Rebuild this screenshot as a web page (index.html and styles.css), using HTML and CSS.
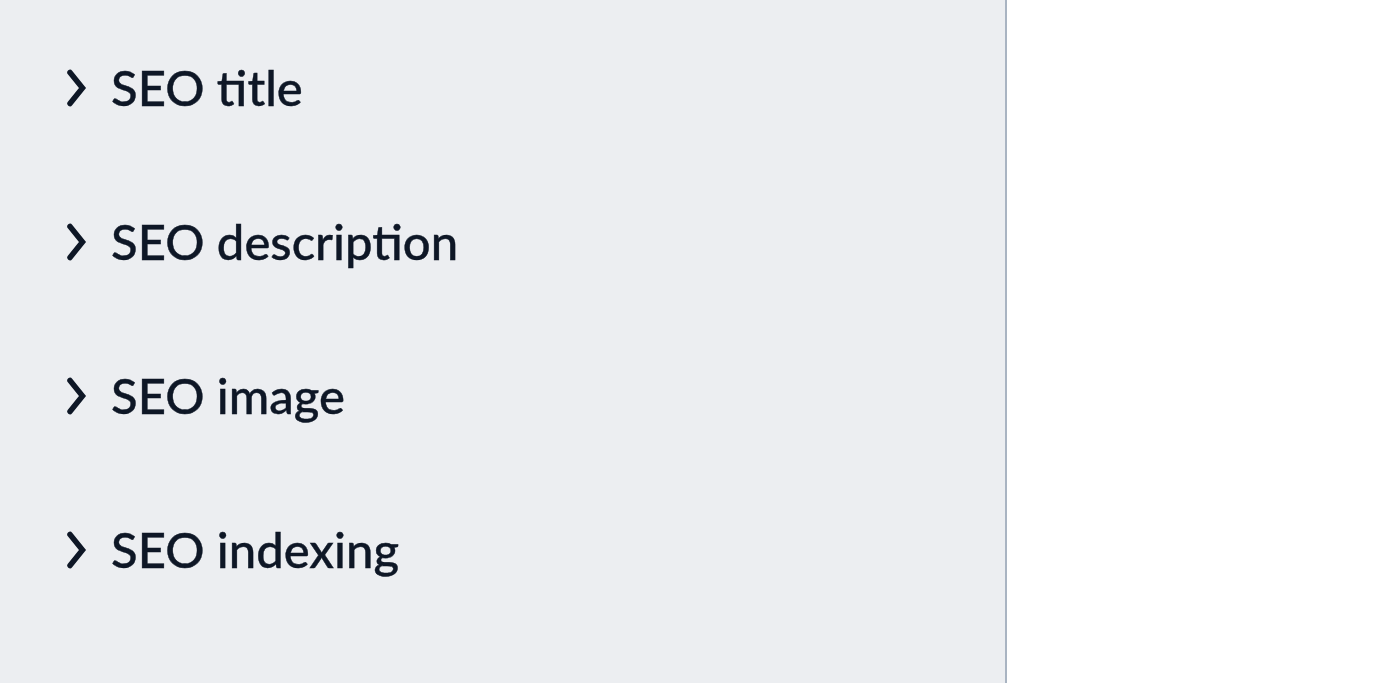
FILE: index.html
```html
<!DOCTYPE html>
<html lang="en">
<head>
    <meta charset="UTF-8">
    <meta name="viewport" content="width=device-width, initial-scale=1.0">
    <title>SEO settings</title>
    <link rel="stylesheet" href="styles.css">
</head>
<body>
    <div class="layout">
        <aside class="sidebar">
            <ul class="section-list">
                <li class="section-item">
                    <svg class="chevron" viewBox="0 0 22 38" width="22" height="38"><polyline points="4,3.5 16.5,19 4,34.5"/></svg>
                    <span>SEO title</span>
                </li>
                <li class="section-item">
                    <svg class="chevron" viewBox="0 0 22 38" width="22" height="38"><polyline points="4,3.5 16.5,19 4,34.5"/></svg>
                    <span>SEO description</span>
                </li>
                <li class="section-item">
                    <svg class="chevron" viewBox="0 0 22 38" width="22" height="38"><polyline points="4,3.5 16.5,19 4,34.5"/></svg>
                    <span>SEO image</span>
                </li>
                <li class="section-item">
                    <svg class="chevron" viewBox="0 0 22 38" width="22" height="38"><polyline points="4,3.5 16.5,19 4,34.5"/></svg>
                    <span>SEO indexing</span>
                </li>
            </ul>
        </aside>
        <main class="content"></main>
    </div>
</body>
</html>
```

FILE: styles.css
```css
body {
    font-family: Lato, "Open Sans", sans-serif;
    margin: 0;
    padding: 0;
    background-color: #fff;
    color: #0e1726;
}
.layout {
    display: flex;
    height: 100vh;
}
.sidebar {
    width: 1005px;
    flex-shrink: 0;
    background-color: #eceef1;
    border-right: 2px solid #a9b4c2;
}
.section-list {
    list-style: none;
    margin: 0;
    padding: 58px 0 0 66px;
    display: flex;
    flex-direction: column;
    gap: 96px;
}
.section-item {
    display: flex;
    align-items: center;
    gap: 23px;
    font-size: 49px;
    font-weight: 500;
    line-height: 58px;
    -webkit-text-stroke: 0.4px #0e1726;
    cursor: pointer;
}
.chevron {
    fill: none;
    stroke: #0e1726;
    stroke-width: 5.5;
    stroke-linecap: round;
    stroke-linejoin: miter;
    margin-top: 2px;
}
.content {
    flex: 1;
}
```
